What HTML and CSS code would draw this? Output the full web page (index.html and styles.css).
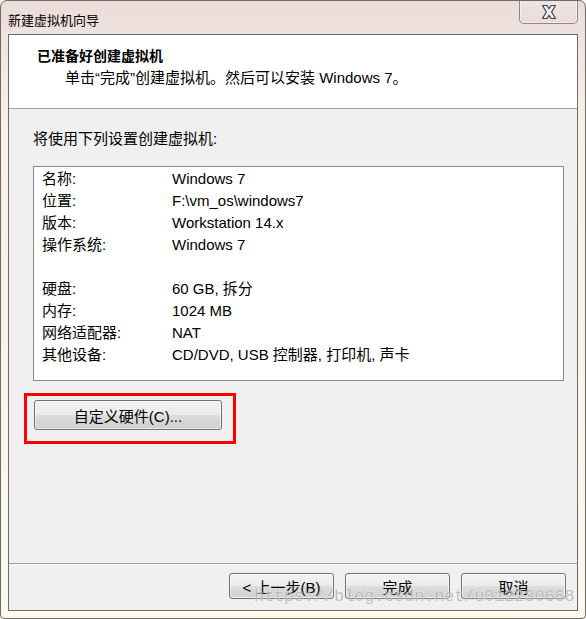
FILE: index.html
```html
<!DOCTYPE html>
<html lang="zh-CN">
<head>
<meta charset="utf-8">
<title>新建虚拟机向导</title>
<link rel="stylesheet" href="styles.css">
</head>
<body>
<div class="window">
  <div class="titlebar">
    <span class="title">新建虚拟机向导</span>
    <div class="close">
      <svg width="22" height="16" viewBox="0 0 22 16">
        <path d="M4.5 1.5 L9 1.5 L11 4.8 L13 1.5 L17.5 1.5 L13.6 8 L17.5 14.5 L13 14.5 L11 11.2 L9 14.5 L4.5 14.5 L8.4 8 Z" fill="#eceef1" stroke="#3f4247" stroke-width="1.2" stroke-linejoin="round"/>
      </svg>
    </div>
  </div>
  <div class="client">
    <div class="header">
      <div class="h-title">已准备好创建虚拟机</div>
      <div class="h-sub">单击“完成”创建虚拟机。然后可以安装 Windows 7。</div>
    </div>
    <div class="body">
      <div class="intro">将使用下列设置创建虚拟机:</div>
      <div class="listbox">
        <div class="row"><span class="k">名称:</span><span class="v">Windows 7</span></div>
        <div class="row"><span class="k">位置:</span><span class="v">F:\vm_os\windows7</span></div>
        <div class="row"><span class="k">版本:</span><span class="v">Workstation 14.x</span></div>
        <div class="row"><span class="k">操作系统:</span><span class="v">Windows 7</span></div>
        <div class="row blank"></div>
        <div class="row"><span class="k">硬盘:</span><span class="v">60 GB, 拆分</span></div>
        <div class="row"><span class="k">内存:</span><span class="v">1024 MB</span></div>
        <div class="row"><span class="k">网络适配器:</span><span class="v">NAT</span></div>
        <div class="row"><span class="k">其他设备:</span><span class="v">CD/DVD, USB 控制器, 打印机, 声卡</span></div>
      </div>
      <div class="highlight">
        <button class="btn btn-wide">自定义硬件(C)...</button>
      </div>
    </div>
    <div class="footer">
      <button class="btn">&lt; 上一步(B)</button>
      <button class="btn">完成</button>
      <button class="btn">取消</button>
    </div>
  </div>
  <div class="watermark">https://blog.csdn.net/u012230668</div>
</div>
</body>
</html>
```

FILE: styles.css
```css
* { box-sizing: border-box; }
html, body {
  margin: 0;
  padding: 0;
  background: #f7f2ea;
}
body {
  font-family: "Liberation Sans", "Noto Sans CJK SC", sans-serif;
  font-size: 15px;
  color: #000;
}
.window {
  position: relative;
  width: 586px;
  height: 619px;
  border: 1px solid #6d6a66;
  border-radius: 7px 7px 4px 4px;
  background: linear-gradient(180deg, #ebdcd8 0px, #efe3df 34px, #f6f0e8 120px, #fbf8ee 619px);
  display: flex;
  flex-direction: column;
  overflow: hidden;
}
.titlebar {
  height: 33px;
  display: flex;
  align-items: flex-start;
  justify-content: space-between;
  padding-left: 7px;
}
.title {
  font-family: "Noto Sans CJK SC", sans-serif;
  font-size: 13px;
  line-height: 13px;
  margin-top: 12px;
  color: #000;
}
.close {
  width: 59px;
  height: 24px;
  margin-right: 7px;
  margin-top: -1px;
  border: 1px solid #8e8885;
  border-top: none;
  border-radius: 0 0 5px 5px;
  background: linear-gradient(180deg, #efe4e1 0%, #eadcd8 100%);
  display: flex;
  align-items: center;
  justify-content: center;
  box-shadow: inset 0 0 0 1px rgba(255,255,255,0.5);
}
.client {
  flex: 1;
  margin: 0 7px 7px 7px;
  border: 1px solid #6b6b6b;
  background: #f0f0f0;
  display: flex;
  flex-direction: column;
}
.header {
  background: #fff;
  height: 74px;
  border-bottom: 1px solid #a0a0a0;
  padding: 10px 0 0 28px;
}
.h-title {
  font-family: "Noto Sans CJK SC", sans-serif;
  font-weight: bold;
  font-size: 14px;
  line-height: 20px;
}
.h-sub {
  padding-left: 28px;
  margin-top: 3px;
  line-height: 20px;
}
.body {
  flex: 1;
  padding: 20px 13px 0 24px;
}
.intro {
  line-height: 20px;
  margin-bottom: 17px;
}
.listbox {
  background: #fff;
  border: 1px solid #868a90;
  height: 215px;
  padding: 1px 8px;
}
.row {
  display: flex;
  height: 22px;
  line-height: 22px;
}
.k { width: 130px; flex: none; }
.v { white-space: nowrap; }
.highlight {
  margin: 12px 0 0 -9px;
  width: 212px;
  height: 51px;
  border: 3px solid #ff0000;
  padding: 4px 0 0 7px;
}
.btn {
  font-family: "Liberation Sans", "Noto Sans CJK SC", sans-serif;
  font-size: 15px;
  color: #000;
  width: 105px;
  height: 26px;
  padding: 0;
  border: 1px solid #707070;
  border-radius: 3px;
  background: linear-gradient(180deg, #f2f2f2 0%, #ebebeb 48%, #dddddd 52%, #cfcfcf 100%);
  box-shadow: inset 0 0 0 1px rgba(255,255,255,0.6);
}
.btn-wide {
  width: 188px;
  height: 30px;
}
.footer {
  height: 47px;
  border-top: 1px solid #a0a0a0;
  box-shadow: inset 0 1px 0 #ffffff;
  display: flex;
  justify-content: flex-end;
  align-items: flex-start;
  gap: 11px;
  padding: 9px 11px 0 0;
}
.watermark {
  position: absolute;
  left: 253px;
  top: 586px;
  font-family: "Liberation Mono", monospace;
  font-size: 16.7px;
  line-height: 20px;
  color: rgba(175, 175, 175, 0.8);
  text-shadow: 0 0 2px rgba(255,255,255,0.8);
  pointer-events: none;
  white-space: nowrap;
}
```
